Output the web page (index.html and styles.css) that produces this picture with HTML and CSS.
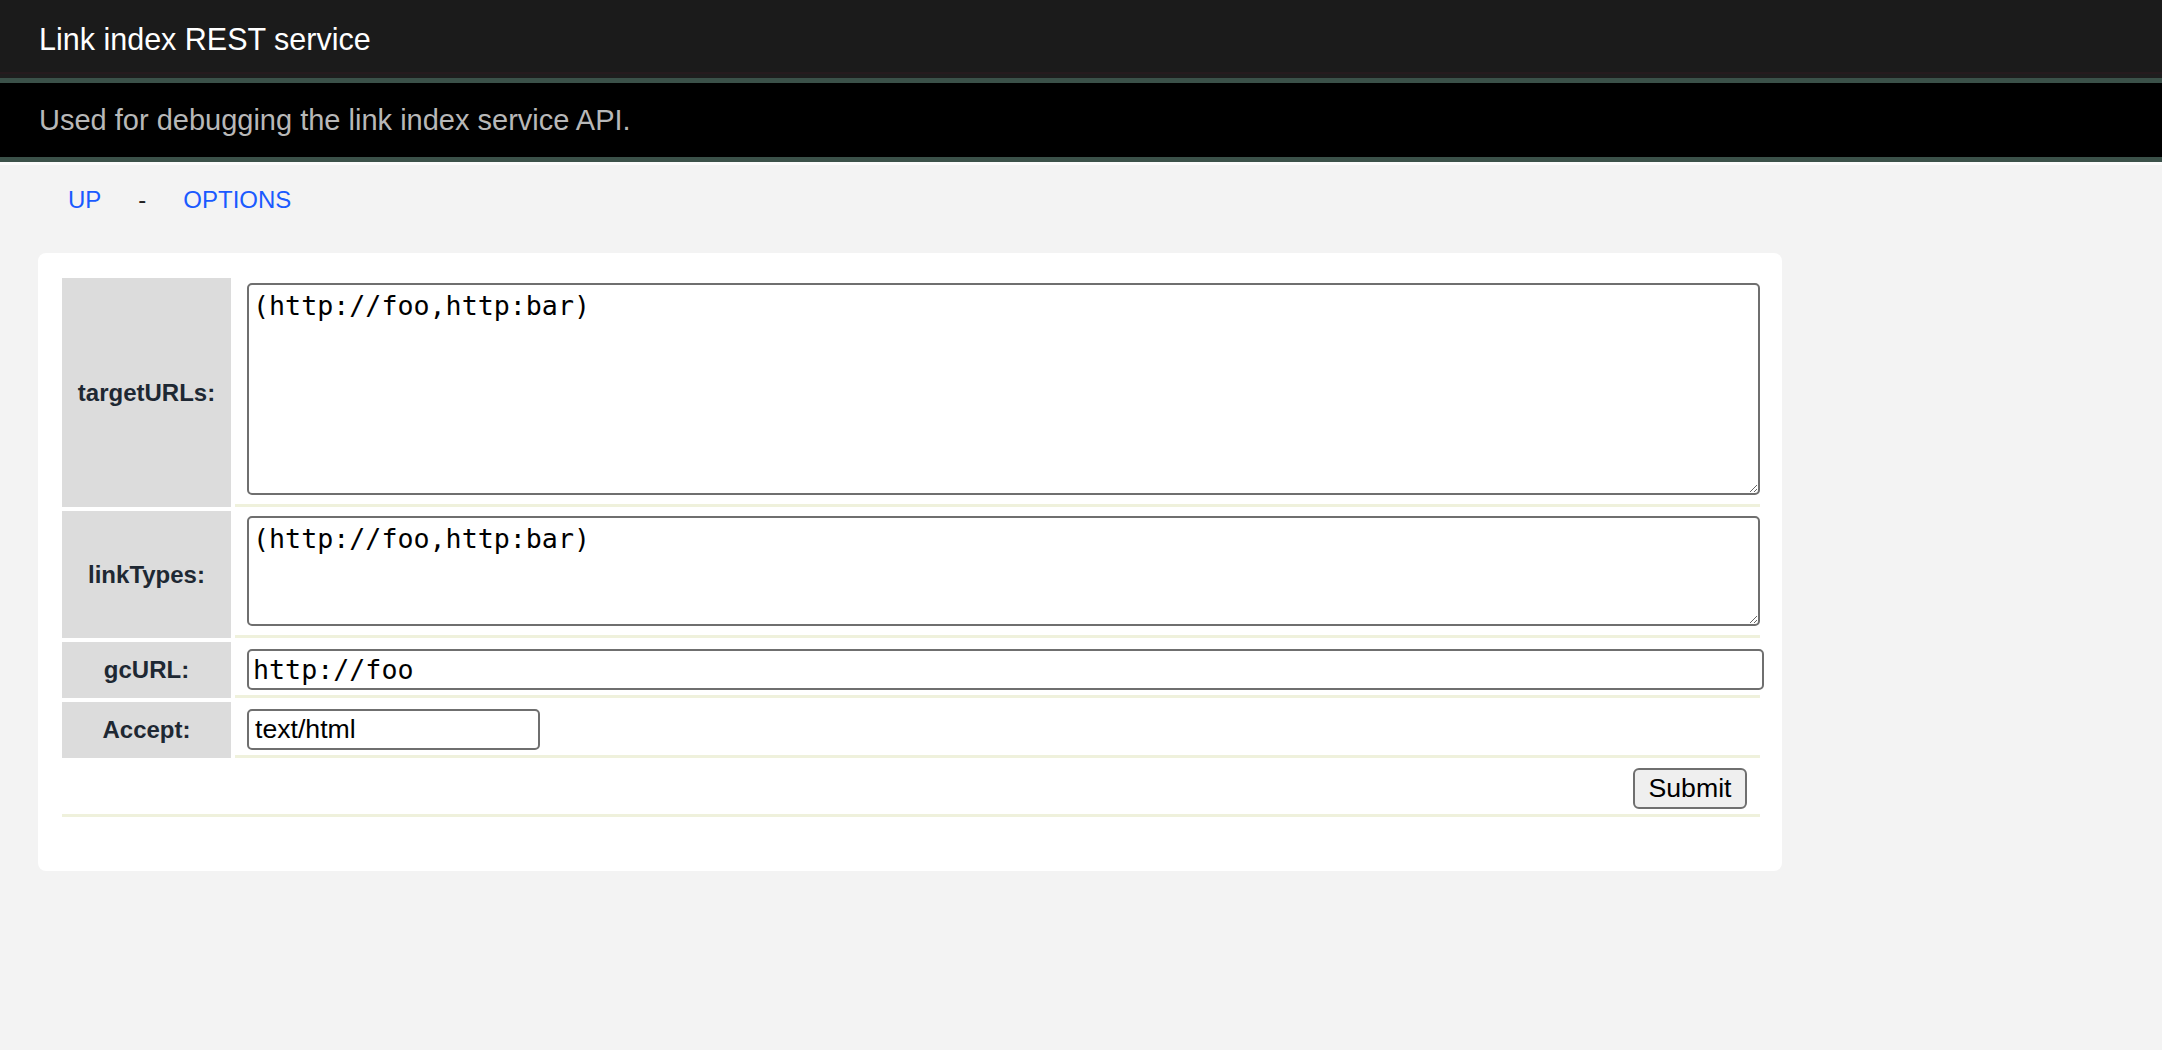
FILE: index.html
```html
<html>
  <head>
    <title>Link index REST service</title>
    <link rel="stylesheet" href="styles.css">
  </head>
  <body>
    <div class="title">Link index REST service</div>
    <div class="subtitle">Used for debugging the link index service API.</div>
    <div class="nav">
      <a href="#">UP</a>
      <span class="sep">-</span>
      <a href="#">OPTIONS</a>
    </div>
    <div class="card">
      <form>
        <table class="params">
          <tr>
            <th>targetURLs:</th>
            <td class="area"><textarea class="big">(http://foo,http:bar)</textarea></td>
          </tr>
          <tr>
            <th>linkTypes:</th>
            <td class="area"><textarea class="small">(http://foo,http:bar)</textarea></td>
          </tr>
          <tr>
            <th>gcURL:</th>
            <td class="line"><input class="wide" type="text" value="http://foo"></td>
          </tr>
          <tr>
            <th>Accept:</th>
            <td class="line"><input class="short" type="text" value="text/html"></td>
          </tr>
          <tr>
            <td class="submit" colspan="2"><input class="button" type="submit" value="Submit"></td>
          </tr>
        </table>
      </form>
    </div>
  </body>
</html>
```

FILE: styles.css
```css
body {
  margin: 0;
  background-color: #f3f3f3;
  font-family: "Liberation Sans", Arial, sans-serif;
}

.title {
  height: 78px;
  padding-left: 39px;
  display: flex;
  align-items: center;
  background-color: #1b1b1b;
  color: #ffffff;
  font-size: 30.5px;
  box-shadow: inset 0 -4px 0 #1e1e1e, inset 0 -6px 0 #261b1e;
  border-bottom: 5px solid #3b5149;
}

.subtitle {
  height: 74px;
  padding-left: 39px;
  display: flex;
  align-items: center;
  background-color: #000000;
  color: #b8b8b8;
  font-size: 29px;
  border-bottom: 5px solid #3b5149;
  box-shadow: 0 3px 0 #fbfbfb;
}

.nav {
  display: flex;
  gap: 37px;
  padding: 24px 0 0 68px;
  font-size: 24px;
  line-height: 28px;
}

.nav a {
  color: #1a5aff;
  text-decoration: none;
}

.nav .sep {
  color: #222222;
}

.card {
  width: 1744px;
  box-sizing: border-box;
  margin: 39px 0 0 38px;
  padding: 21px 18px 50px 20px;
  background-color: #ffffff;
  border-radius: 8px;
}

form {
  margin: 0;
}

.params {
  width: 100%;
  border-collapse: separate;
  border-spacing: 4px;
}

.params th {
  width: 169px;
  padding: 0;
  background-color: #dcdcdc;
  color: #1e2833;
  font-size: 24px;
  font-weight: bold;
  text-align: center;
  vertical-align: middle;
}

.params td {
  border-bottom: 3px solid #eff1dc;
  vertical-align: top;
}

.params td.area {
  padding: 5px 0 9px 12px;
}

.params td.line {
  padding: 7px 0 5px 12px;
}

.params td.submit {
  padding: 6px 13px 5px 0;
  text-align: right;
}

textarea, input {
  display: block;
  box-sizing: border-box;
  margin: 0;
  border: 2px solid #6f6f6f;
  border-radius: 5px;
  background-color: #ffffff;
  color: #000000;
}

textarea {
  width: 100%;
  padding: 5px 4px 4px 4px;
  font-family: "DejaVu Sans Mono", Menlo, monospace;
  font-size: 26.67px;
}

textarea.big {
  height: 212px;
}

textarea.small {
  height: 110px;
}

input.wide {
  width: calc(100% + 4px);
  height: 41px;
  padding: 0 4px;
  font-family: "DejaVu Sans Mono", Menlo, monospace;
  font-size: 26.67px;
}

input.short {
  width: 293px;
  height: 41px;
  padding: 0 6px;
  font-family: "Liberation Sans", Arial, sans-serif;
  font-size: 26.67px;
}

input.button {
  display: inline-block;
  width: 114px;
  height: 41px;
  padding: 0;
  background-color: #efefef;
  border-radius: 6px;
  font-family: "Liberation Sans", Arial, sans-serif;
  font-size: 26.67px;
}
```
